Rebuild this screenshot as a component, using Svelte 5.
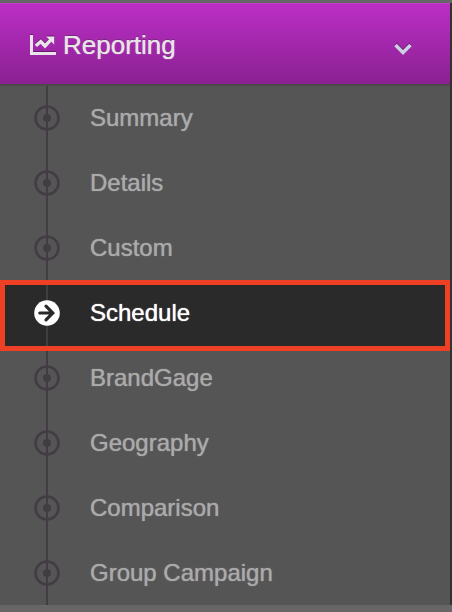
<script lang="ts">
	const items = [
		'Summary',
		'Details',
		'Custom',
		'Schedule',
		'BrandGage',
		'Geography',
		'Comparison',
		'Group Campaign'
	];

	let open = $state(true);
	let active = $state('Schedule');
</script>

<div class="page">
	<nav class="sidebar" aria-label="Reporting">
		<button class="header" aria-expanded={open} onclick={() => (open = !open)}>
			<svg class="chart" viewBox="0 0 26 20" aria-hidden="true">
				<path d="M1.5 0V18.5H26" fill="none" stroke="currentColor" stroke-width="3" />
				<path d="M5.8 10.8L10.8 6.5L15 11L21 4.6" fill="none" stroke="currentColor" stroke-width="3.4" />
				<path d="M16.2 1.6H24.2V9.6Z" fill="currentColor" />
			</svg>
			<span class="title">Reporting</span>
			<svg class="chevron" viewBox="0 0 18 12" aria-hidden="true">
				<path d="M1.5 2L9 9.5L16.5 2" fill="none" stroke="currentColor" stroke-width="3.4" />
			</svg>
		</button>

		{#if open}
			<ul>
				{#each items as item}
					<li class:active={item === active}>
						<a
							href="#{item}"
							aria-current={item === active ? 'page' : undefined}
							onclick={() => (active = item)}
						>
							<svg class="dot" viewBox="0 0 26 26" aria-hidden="true">
								{#if item === active}
									<circle cx="13" cy="13" r="12.8" fill="#fff" />
									<path
										d="M5.8 13H19M12 6.2L18.8 13L12 19.8"
										fill="none"
										stroke="#2a2a2a"
										stroke-width="3.2"
										stroke-linecap="round"
									/>
								{:else}
									<circle cx="13" cy="13" r="11.5" fill="none" stroke="#443c45" stroke-width="2.6" />
									<circle cx="13" cy="13" r="4" fill="#443c45" />
								{/if}
							</svg>
							<span>{item}</span>
						</a>
					</li>
				{/each}
			</ul>
		{/if}
	</nav>
</div>

<style>
	:global(body) {
		margin: 0;
		background: #666;
	}

	.page {
		padding: 3px 0 7px;
		font-family: 'Liberation Sans', Arial, sans-serif;
	}

	.sidebar {
		border-right: 2px solid #333231;
		background: #555;
	}

	.header {
		display: flex;
		align-items: center;
		box-sizing: border-box;
		width: 100%;
		height: 83px;
		padding: 2px 38px 0 30px;
		border: 0;
		border-top: 1px solid #c43fcd;
		border-bottom: 2px solid #4b4b4b;
		background: linear-gradient(#bb2ec5, #8a2191);
		background-clip: padding-box;
		color: #e8e4e8;
		font: inherit;
		font-size: 26px;
		text-align: left;
		text-shadow: 0 0 1px #e8e4e8, 0 -1px 0 #6a1870;
		cursor: pointer;
	}

	.chart {
		width: 26px;
		height: 20px;
		margin-right: 7px;
		filter: drop-shadow(0 -1px 0 #6a1870);
	}

	.title {
		flex: 1;
	}

	.chevron {
		width: 18px;
		height: 12px;
		margin-top: 8px;
		color: #ccd2e2;
		filter: drop-shadow(0 -1px 0 #6a1870);
	}

	ul {
		display: grid;
		grid-auto-rows: 1fr;
		min-height: 519px;
		margin: 0;
		padding: 0;
		list-style: none;
		background: linear-gradient(#443c45, #443c45) 46px 0 / 2px 100% no-repeat;
	}

	li {
		position: relative;
		display: grid;
	}

	a {
		display: flex;
		align-items: center;
		gap: 30px;
		padding-left: 34px;
		color: #aaa;
		font-size: 24px;
		text-decoration: none;
		text-shadow: 0 0 1px currentColor;
	}

	.dot {
		width: 26px;
		height: 26px;
	}

	.active {
		background: linear-gradient(#443c45, #443c45) 46px 0 / 2px 100% no-repeat #2a2a2a;
	}

	.active a {
		color: #fff;
	}

	/* highlight frame, hangs a little below the row */
	.active::after {
		content: '';
		position: absolute;
		inset: -1px 0 -5px;
		border: 5px solid #ee4025;
		pointer-events: none;
	}
</style>
